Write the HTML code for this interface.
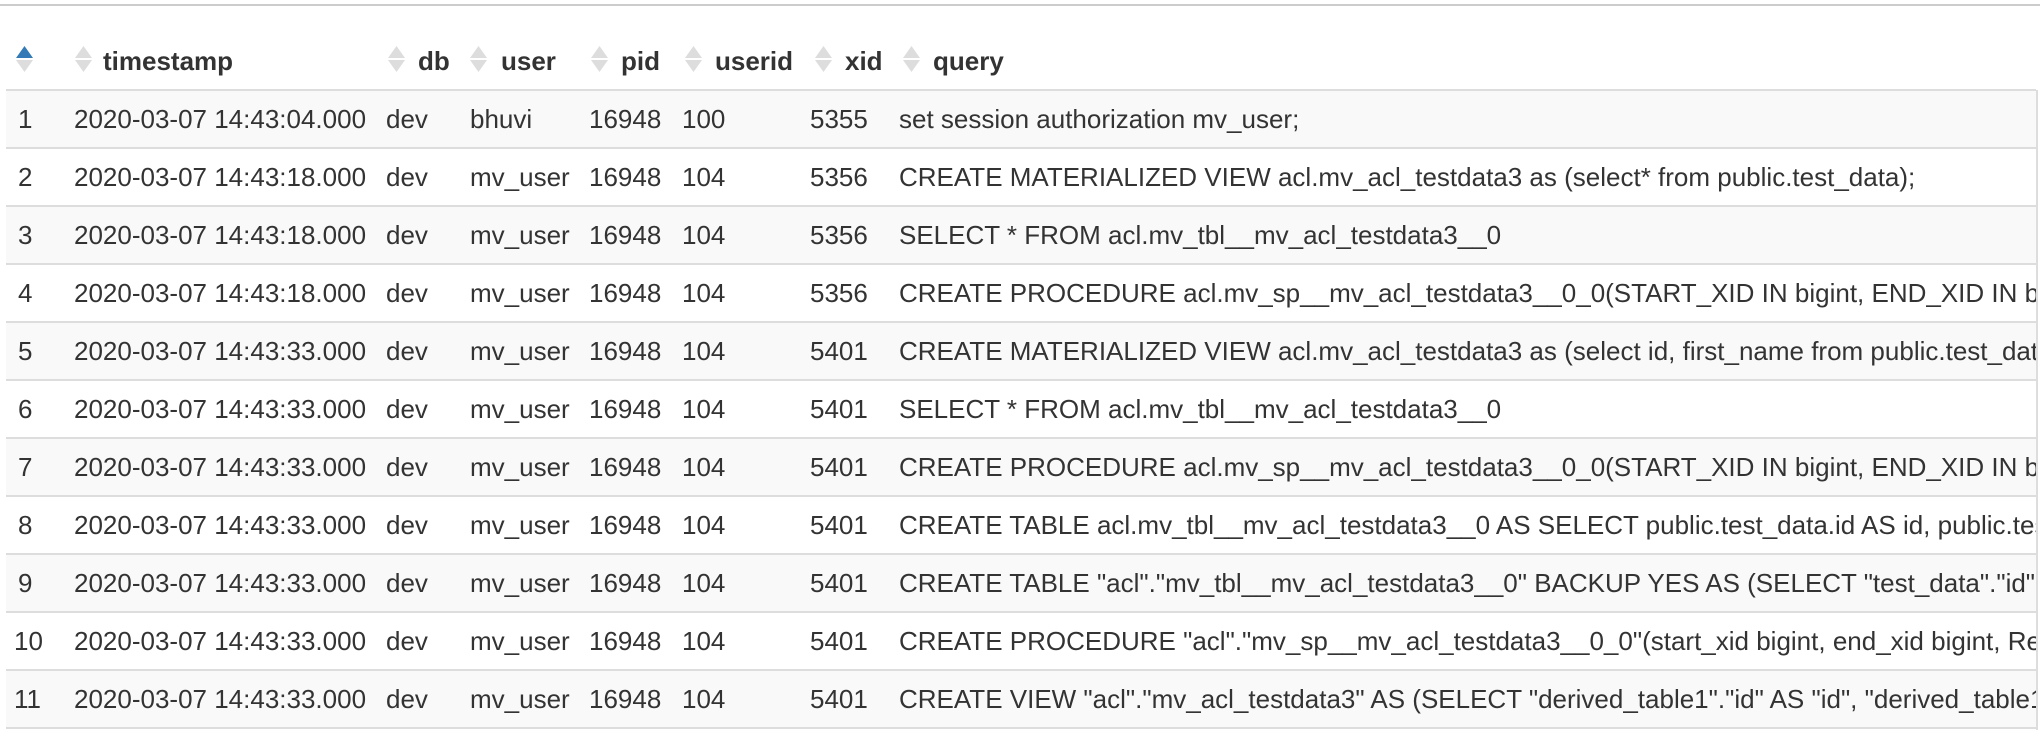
<!DOCTYPE html>
<html><head><meta charset="utf-8"><style>
body{margin:0;width:2040px;height:745px;background:#fff;overflow:hidden;font-family:"Liberation Sans",Arial,sans-serif;color:#333;position:relative}
#wrap{position:absolute;left:0;top:0;width:2036px;height:745px;overflow:hidden}
.topline{position:absolute;left:0;top:4px;width:2040px;height:2px;background:#ccc}
.hdr{position:absolute;top:41px;font-weight:bold;font-size:26px;line-height:40px;white-space:nowrap}
.ic{position:absolute;top:46px;width:17px;height:26px}
.hline{position:absolute;left:6px;width:2034px;height:2px;background:#ddd}
.row{position:absolute;left:6px;width:2034px;height:56px}
.c{position:absolute;font-size:26px;line-height:58px;white-space:nowrap}
.rb{position:absolute;left:2036px;top:90px;width:2px;height:640px;background:#ddd}
</style></head><body>
<div class="topline"></div>
<div id="wrap">
<svg class="ic" style="left:16px" viewBox="0 0 17 26"><polygon points="8.5,0 17,12 0,12" fill="#337ab7"/><polygon points="0,14 17,14 8.5,26" fill="#ddd"/></svg>
<svg class="ic" style="left:75px" viewBox="0 0 17 26"><polygon points="8.5,0 17,12 0,12" fill="#ddd"/><polygon points="0,14 17,14 8.5,26" fill="#ddd"/></svg>
<div class="hdr" style="left:103px">timestamp</div>
<svg class="ic" style="left:388px" viewBox="0 0 17 26"><polygon points="8.5,0 17,12 0,12" fill="#ddd"/><polygon points="0,14 17,14 8.5,26" fill="#ddd"/></svg>
<div class="hdr" style="left:418px">db</div>
<svg class="ic" style="left:470px" viewBox="0 0 17 26"><polygon points="8.5,0 17,12 0,12" fill="#ddd"/><polygon points="0,14 17,14 8.5,26" fill="#ddd"/></svg>
<div class="hdr" style="left:501px">user</div>
<svg class="ic" style="left:591px" viewBox="0 0 17 26"><polygon points="8.5,0 17,12 0,12" fill="#ddd"/><polygon points="0,14 17,14 8.5,26" fill="#ddd"/></svg>
<div class="hdr" style="left:621px">pid</div>
<svg class="ic" style="left:685px" viewBox="0 0 17 26"><polygon points="8.5,0 17,12 0,12" fill="#ddd"/><polygon points="0,14 17,14 8.5,26" fill="#ddd"/></svg>
<div class="hdr" style="left:715px">userid</div>
<svg class="ic" style="left:815px" viewBox="0 0 17 26"><polygon points="8.5,0 17,12 0,12" fill="#ddd"/><polygon points="0,14 17,14 8.5,26" fill="#ddd"/></svg>
<div class="hdr" style="left:845px">xid</div>
<svg class="ic" style="left:903px" viewBox="0 0 17 26"><polygon points="8.5,0 17,12 0,12" fill="#ddd"/><polygon points="0,14 17,14 8.5,26" fill="#ddd"/></svg>
<div class="hdr" style="left:933px">query</div>
<div id="rows"></div>
</div>
<div class="rb"></div>
<script>
var d=[
["1","2020-03-07 14:43:04.000","dev","bhuvi","16948","100","5355","set session authorization mv_user;"],
["2","2020-03-07 14:43:18.000","dev","mv_user","16948","104","5356","CREATE MATERIALIZED VIEW acl.mv_acl_testdata3 as (select* from public.test_data);"],
["3","2020-03-07 14:43:18.000","dev","mv_user","16948","104","5356","SELECT * FROM acl.mv_tbl__mv_acl_testdata3__0"],
["4","2020-03-07 14:43:18.000","dev","mv_user","16948","104","5356","CREATE PROCEDURE acl.mv_sp__mv_acl_testdata3__0_0(START_XID IN bigint, END_XID IN bigint, RefreshType"],
["5","2020-03-07 14:43:33.000","dev","mv_user","16948","104","5401","CREATE MATERIALIZED VIEW acl.mv_acl_testdata3 as (select id, first_name from public.test_data);"],
["6","2020-03-07 14:43:33.000","dev","mv_user","16948","104","5401","SELECT * FROM acl.mv_tbl__mv_acl_testdata3__0"],
["7","2020-03-07 14:43:33.000","dev","mv_user","16948","104","5401","CREATE PROCEDURE acl.mv_sp__mv_acl_testdata3__0_0(START_XID IN bigint, END_XID IN bigint, RefreshType"],
["8","2020-03-07 14:43:33.000","dev","mv_user","16948","104","5401","CREATE TABLE acl.mv_tbl__mv_acl_testdata3__0 AS SELECT public.test_data.id AS id, public.test_data.first_name"],
["9","2020-03-07 14:43:33.000","dev","mv_user","16948","104","5401","CREATE TABLE \"acl\".\"mv_tbl__mv_acl_testdata3__0\" BACKUP YES AS (SELECT \"test_data\".\"id\" AS \"id\""],
["10","2020-03-07 14:43:33.000","dev","mv_user","16948","104","5401","CREATE PROCEDURE \"acl\".\"mv_sp__mv_acl_testdata3__0_0\"(start_xid bigint, end_xid bigint, RefreshType"],
["11","2020-03-07 14:43:33.000","dev","mv_user","16948","104","5401","CREATE VIEW \"acl\".\"mv_acl_testdata3\" AS (SELECT \"derived_table1\".\"id\" AS \"id\", \"derived_table1\".\"first_name\""]];
var xs=[14,74,386,470,589,682,810,899],h="";
for(var i=0;i<d.length;i++){var t=90+58*i;
h+='<div class="hline" style="top:'+(t-1)+'px"></div>';
h+='<div class="row" style="top:'+(t+1)+'px;background:'+(i%2==0?'#f9f9f9':'#fff')+'"></div>';
for(var j=0;j<8;j++){var s=d[i][j].replace(/&/g,'&amp;').replace(/</g,'&lt;');
h+='<div class="c" style="top:'+t+'px;left:'+(j==0&&i<9?18:xs[j])+'px">'+s+'</div>';}}
h+='<div class="hline" style="top:727px"></div>';
document.getElementById('rows').innerHTML=h;
</script>
</body></html>
